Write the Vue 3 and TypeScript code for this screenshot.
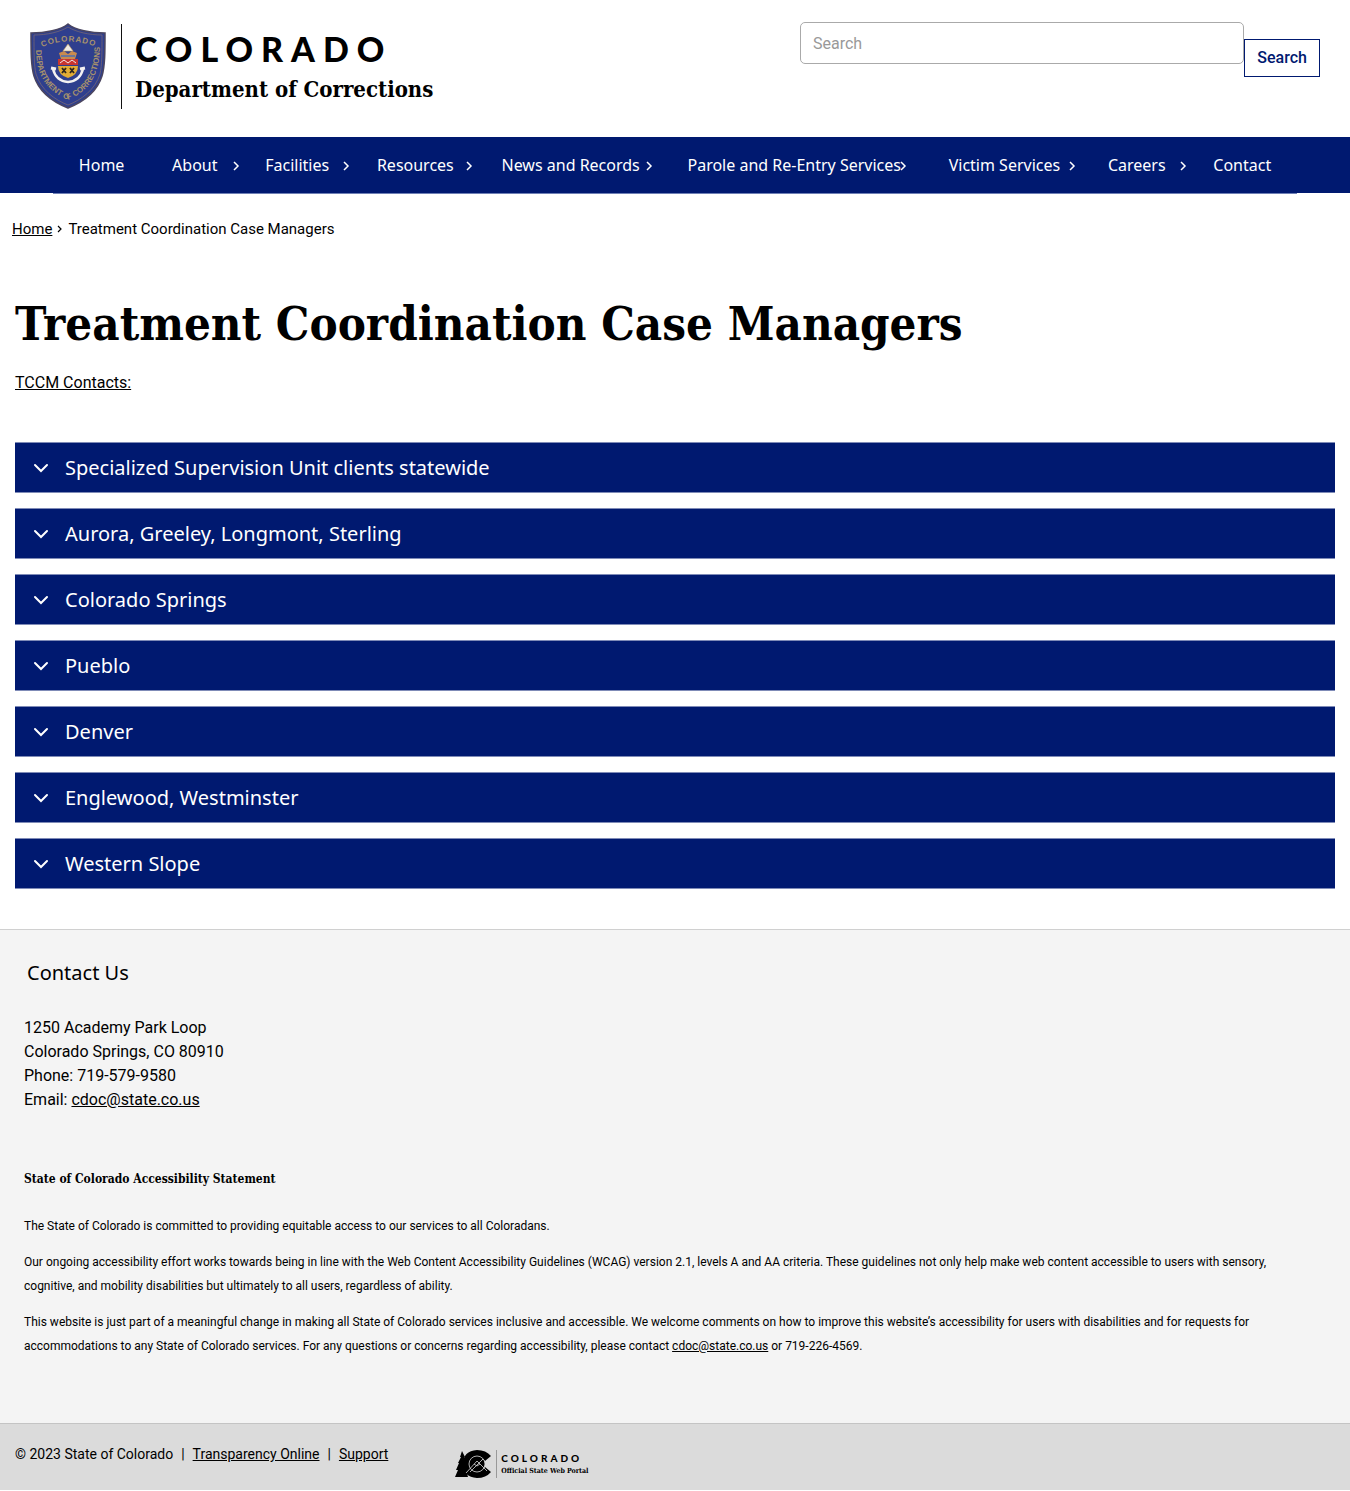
<script setup lang="ts">
import { ref } from 'vue'

interface NavItem {
  label: string
  hasMenu: boolean
}

const navItems: NavItem[] = [
  { label: 'Home', hasMenu: false },
  { label: 'About', hasMenu: true },
  { label: 'Facilities', hasMenu: true },
  { label: 'Resources', hasMenu: true },
  { label: 'News and Records', hasMenu: true },
  { label: 'Parole and Re-Entry Services', hasMenu: true },
  { label: 'Victim Services', hasMenu: true },
  { label: 'Careers', hasMenu: true },
  { label: 'Contact', hasMenu: false },
]

const regions: string[] = [
  'Specialized Supervision Unit clients statewide',
  'Aurora, Greeley, Longmont, Sterling',
  'Colorado Springs',
  'Pueblo',
  'Denver',
  'Englewood, Westminster',
  'Western Slope',
]

const query = ref('')
</script>

<template>
  <div class="page">
    <header class="header">
      <a href="#" class="brand">
        <svg class="shield" viewBox="0 0 76 86" width="76" height="86" aria-hidden="true">
          <path d="M38 1 C31 7 15 10 1 10 C1 29 1 43 4 53 C9 69 23 79 38 85 C53 79 67 69 72 53 C75 43 75 29 75 10 C61 10 45 7 38 1Z" fill="#2f3f8e" stroke="#4a4560" stroke-width="1.5" />
          <path d="M38 4 C30 9 17 12 4 12 C4 30 4 42 6 51 C11 67 25 77 38 82 C51 77 65 67 70 51 C72 42 72 30 72 12 C59 12 46 9 38 4Z" fill="none" stroke="#766672" stroke-width="0.8" />
          <path id="arc-top" d="M12 24 Q38 13 66 24" fill="none" />
          <path id="arc-bottom" d="M6 27 C6 54 18 68 38 77 C58 68 70 54 70 22" fill="none" />
          <text class="shield-top"><textPath href="#arc-top">COLORADO</textPath></text>
          <text class="shield-rim"><textPath href="#arc-bottom">DEPARTMENT OF CORRECTIONS</textPath></text>
          <path d="M38 21 L43 28 H33Z" fill="#f0ece4" stroke="#c8a15a" stroke-width="0.6" />
          <path d="M29 30 L34 28 L38 31 L42 28 L47 30 L45 36 H31Z" fill="#c98b4e" />
          <path d="M31 33 H45" stroke="#4b6fb4" stroke-width="1.5" />
          <path d="M28 36 H48 V42 H28Z" fill="#c8352f" />
          <path d="M30 40 L34 37 L38 40 L42 37 L46 40" fill="none" stroke="#f1e7e7" stroke-width="1" />
          <path d="M28 43 H48 Q48 52 38 55 Q28 52 28 43Z" fill="#e2ac35" />
          <path d="M32 50 L36 45 M36 50 L32 45 M40 50 L44 45 M44 50 L40 45" stroke="#2d241c" stroke-width="1.8" />
          <path d="M23 46 Q26 58 38 59 Q50 58 53 46" fill="none" stroke="#f3f1f2" stroke-width="2.5" />
          <path d="M21 45 L26 46 M50 46 L55 45" stroke="#f3f1f2" stroke-width="3" />
        </svg>
        <span class="brand-text">
          <span class="brand-state">COLORADO</span>
          <span class="brand-dept">Department of Corrections</span>
        </span>
      </a>
      <form class="search" role="search" @submit.prevent>
        <input v-model="query" class="search-input" type="search" placeholder="Search" aria-label="Search" />
        <button class="search-button" type="submit">Search</button>
      </form>
    </header>

    <nav class="nav" aria-label="Main">
      <ul class="nav-list">
        <li v-for="item in navItems" :key="item.label" class="nav-item">
          <a href="#" class="nav-link">{{ item.label }}</a>
          <svg v-if="item.hasMenu" class="nav-chevron" viewBox="0 0 8 10" width="8" height="10" aria-hidden="true">
            <path d="M2 1 L6 5 L2 9" fill="none" stroke="#fff" stroke-width="1.5" />
          </svg>
        </li>
      </ul>
    </nav>

    <div class="breadcrumb">
      <a href="#">Home</a>
      <svg viewBox="0 0 6 8" width="6" height="8" aria-hidden="true">
        <path d="M1 1 L4 4 L1 7" fill="none" stroke="#000" stroke-width="1.2" />
      </svg>
      <span>Treatment Coordination Case Managers</span>
    </div>

    <main class="main">
      <h1>Treatment Coordination Case Managers</h1>
      <p class="contacts"><u>TCCM Contacts:</u></p>
      <div class="accordion">
        <button v-for="region in regions" :key="region" class="accordion-button" type="button" aria-expanded="false">
          <svg viewBox="0 0 16 10" width="16" height="10" aria-hidden="true">
            <path d="M2 2 L8 8 L14 2" fill="none" stroke="#fff" stroke-width="2" stroke-linecap="round" />
          </svg>
          <span>{{ region }}</span>
        </button>
      </div>
    </main>

    <footer>
      <section class="info">
        <h2>Contact Us</h2>
        <address>
          1250 Academy Park Loop<br />
          Colorado Springs, CO 80910<br />
          Phone: 719-579-9580<br />
          Email: <a href="#">cdoc@state.co.us</a>
        </address>
        <h3>State of Colorado Accessibility Statement</h3>
        <p>The State of Colorado is committed to providing equitable access to our services to all Coloradans.</p>
        <p>Our ongoing accessibility effort works towards being in line with the Web Content Accessibility Guidelines (WCAG) version 2.1, levels A and AA criteria. These guidelines not only help make web content accessible to users with sensory, cognitive, and mobility disabilities but ultimately to all users, regardless of ability.</p>
        <p>This website is just part of a meaningful change in making all State of Colorado services inclusive and accessible. We welcome comments on how to improve this website’s accessibility for users with disabilities and for requests for accommodations to any State of Colorado services. For any questions or concerns regarding accessibility, please contact <a href="#">cdoc@state.co.us</a> or 719-226-4569.</p>
      </section>
      <div class="legal">
        <div class="legal-links">
          <span>© 2023 State of Colorado</span>
          <span>|</span>
          <a href="#">Transparency Online</a>
          <span>|</span>
          <a href="#">Support</a>
        </div>
        <a href="#" class="portal">
          <svg viewBox="0 0 37 28" width="37" height="28" aria-hidden="true">
            <path d="M7 1 L10 7 L9 7 L12 13 L10 13 L13 20 L11 20 L13 27 H0 L3 20 H1 L4 13 H3 L6 7 H5Z" fill="#000" />
            <path d="M36 6 L30 11 Q27 7 22 8 Q17 9 17 14 Q17 19 22 20 Q27 21 30 17 L36 22 Q31 28 22 28 Q8 27 8 14 Q8 1 22 0 Q31 0 36 6Z" fill="#000" />
            <circle cx="22" cy="14" r="8" fill="#000" stroke="#dbdbdb" stroke-width="0.8" />
            <path d="M11 23 L22 11 L32 21 M19 14 L22 16 L25 14 M28 9 L15 22" fill="none" stroke="#dbdbdb" stroke-width="0.8" />
          </svg>
          <span class="portal-text">
            <span class="portal-state">COLORADO</span>
            <span class="portal-name">Official State Web Portal</span>
          </span>
        </a>
      </div>
    </footer>
  </div>
</template>

<style>
body {
  margin: 0;
  background: #fff;
}
</style>

<style scoped>
.page {
  font-family: Roboto, "Noto Sans", sans-serif;
  font-size: 16px;
  line-height: 24px;
  color: #000;
}

.page * {
  box-sizing: border-box;
}

a {
  color: inherit;
}

.header {
  display: flex;
  justify-content: space-between;
  align-items: flex-start;
  padding: 22px 30px 27px;
}

.brand {
  display: flex;
  text-decoration: none;
}

.shield {
  display: block;
  margin-top: 1px;
}

.shield-top {
  font: 700 8px "Liberation Sans", sans-serif;
  letter-spacing: 1px;
  fill: #a8926c;
}

.shield-rim {
  font: 700 8px "Liberation Sans", sans-serif;
  fill: #a8926c;
}

.brand-text {
  display: flex;
  flex-direction: column;
  margin: 2px 0 1px 15px;
  padding: 5px 0 0 13px;
  border-left: 1px solid #111;
  height: 85px;
}

.brand-state {
  font: 900 34px/40px Lato, sans-serif;
  letter-spacing: 8px;
}

.brand-dept {
  font: 700 22px/40px "DejaVu Serif Condensed", "DejaVu Serif", serif;
}

.search {
  display: flex;
  width: 520px;
}

.search-input {
  flex: 1;
  min-width: 0;
  height: 42px;
  padding: 0 12px;
  border: 1px solid #aaa;
  border-radius: 5px;
  background: #fff;
  font: 16px/24px Roboto, sans-serif;
}

.search-input::placeholder {
  color: #999;
}

.search-button {
  height: 38px;
  margin-top: 17px;
  padding: 0 12px;
  border: 1px solid #001970;
  background: #fff;
  color: #001970;
  font: 500 16px/24px Roboto, sans-serif;
}

.nav {
  height: 56px;
  padding: 0 53px;
  background: #001970;
}

.nav-list {
  display: flex;
  height: 57px;
  margin: 0;
  padding: 0 2px;
  border-bottom: 1px solid #6f80b5;
  list-style: none;
}

.nav-item {
  position: relative;
  display: flex;
  flex: 1 1 auto;
  align-items: center;
  justify-content: center;
}

.nav-link {
  padding: 0 23px;
  color: #fff;
  font: 16px/24px "Noto Sans", sans-serif;
  text-decoration: none;
  white-space: nowrap;
}

.nav-chevron {
  position: absolute;
  left: 90%;
  top: 24px;
}

.breadcrumb {
  display: flex;
  align-items: center;
  gap: 5px;
  padding: 24px 12px;
  font-size: 15px;
}

.main {
  padding: 31px 15px 40px;
}

h1 {
  margin: 0;
  font: 700 47px/56px "DejaVu Serif Condensed", "DejaVu Serif", serif;
}

.contacts {
  margin: 19px 0 47px;
}

.accordion {
  display: flex;
  flex-direction: column;
  gap: 15px;
}

.accordion-button {
  display: flex;
  align-items: center;
  gap: 16px;
  height: 51px;
  padding: 0 18px;
  border: solid #7f8bb7;
  border-width: 1px 0;
  background: #001970;
  color: #fff;
  font: 20px/28px "Noto Sans", sans-serif;
  text-align: left;
}

.info {
  padding: 28px 48px 53px 24px;
  border-top: 1px solid #d0d0d0;
  background: #f4f4f4;
  font-size: 12px;
}

h2 {
  margin: 0 3px 28px;
  font: 20px/30px "Noto Sans", sans-serif;
}

address {
  font-size: 16px;
  font-style: normal;
}

h3 {
  margin: 55px 0 23px;
  font: 700 12px/24px "DejaVu Serif Condensed", "DejaVu Serif", serif;
}

.info p {
  margin: 0 0 12px;
}

.legal {
  display: flex;
  align-items: flex-start;
  gap: 67px;
  height: 67px;
  padding: 18px 15px;
  border-top: 1px solid #c4c4c4;
  background: #dbdbdb;
  font-size: 14px;
}

.legal-links {
  display: flex;
  gap: 8px;
}

.portal {
  display: flex;
  margin-top: 8px;
  text-decoration: none;
}

.portal-text {
  display: flex;
  flex-direction: column;
  margin-left: 4px;
  padding: 2px 0 0 4px;
  border-left: 1px solid #999;
}

.portal-state {
  font: 900 10px/12px Lato, sans-serif;
  letter-spacing: 3px;
}

.portal-name {
  font: 700 7px/13px "DejaVu Serif Condensed", "DejaVu Serif", serif;
}
</style>
